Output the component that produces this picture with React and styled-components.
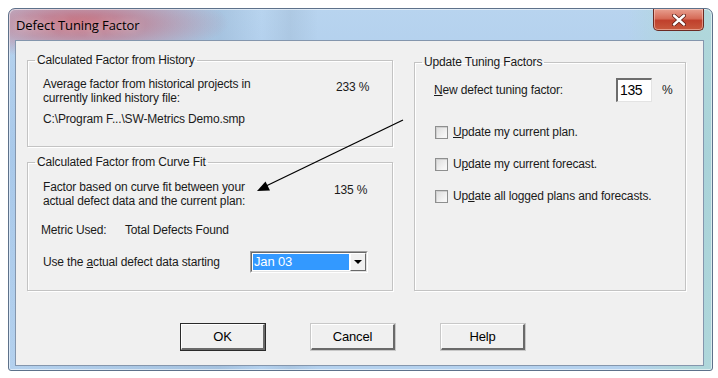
import React from 'react'
import styled, { createGlobalStyle } from 'styled-components'

const GlobalStyle = createGlobalStyle`
	body {
		margin: 0;
		background: #ffffff;
	}
`

const Page = styled.div`
	position: relative;
	width: 718px;
	height: 378px;
	padding: 8px 0 0 8px;
	box-sizing: border-box;
	font-family: "Liberation Sans", Arial, sans-serif;
	font-size: 12px;
	letter-spacing: -0.15px;
	color: #1a1a1a;
`

const Window = styled.div`
	width: 705px;
	height: 363px;
	box-sizing: border-box;
	border: 1px solid #5d718a;
	border-radius: 7px 7px 3px 3px;
	padding: 0 8px 4px 6px;
	display: flex;
	flex-direction: column;
	background:
		radial-gradient(ellipse 150px 36px at 70px 14px, rgba(200, 92, 106, 0.9), rgba(200, 92, 106, 0) 100%),
		linear-gradient(90deg, rgba(255,255,255,0) 0%, rgba(120,150,180,0.25) 30%, rgba(255,255,255,0) 36%, rgba(150,175,200,0.3) 40%, rgba(255,255,255,0) 44%, rgba(255,255,255,0) 88%, rgba(170,220,200,0.5) 96%),
		linear-gradient(180deg, #b8d4ef 0%, #a9c9ea 40%, #b4d1ee 100%);
	box-shadow: inset 0 0 0 1px rgba(255, 255, 255, 0.55);
`

const TitleBar = styled.div`
	height: 31px;
	display: flex;
	justify-content: space-between;
	flex-shrink: 0;
`

const Title = styled.span`
	align-self: center;
	margin-left: 1px;
	font-family: "Open Sans", "Liberation Sans", sans-serif;
	font-size: 13px;
	letter-spacing: -0.1px;
	color: #000;
	text-shadow: 0 0 8px rgba(255, 255, 255, 0.9);
`

const CloseButton = styled.div`
	width: 51px;
	height: 22px;
	box-sizing: border-box;
	border: 1px solid #6b2a22;
	border-top: none;
	border-radius: 0 0 5px 5px;
	background: linear-gradient(180deg, #e8a090 0%, #d66c58 45%, #c0402c 55%, #c85a3e 100%);
	box-shadow: inset 0 0 0 1px rgba(255, 220, 210, 0.5);
	display: flex;
	align-items: center;
	justify-content: center;
`

const Client = styled.div`
	flex: 1;
	border: 1px solid #8496ad;
	background: #f0f0f0;
	padding: 12px 16px 0 11px;
	display: flex;
	flex-direction: column;
`

const Columns = styled.div`
	display: grid;
	grid-template-columns: 366px 272px;
	column-gap: 21px;
`

const Stack = styled.div`
	display: flex;
	flex-direction: column;
	gap: 8px;
`

const Group = styled.fieldset`
	margin: 0;
	min-width: 0;
	padding: 0;
	border: 1px solid #c3c3c3;
	box-shadow: inset 1px 1px 0 #ffffff, 1px 1px 0 #ffffff;
	margin-top: ${p => p.$top || 0}px;
`

const Legend = styled.legend`
	margin-left: 7px;
	padding: 0 2px;
	line-height: 14px;
`

const GroupBody = styled.div`
	padding: ${p => p.$pad};
`

const InfoRow = styled.div`
	display: grid;
	grid-template-columns: ${p => p.$col}px auto;
	line-height: 14px;
`

const Value = styled.span`
	margin-top: 3px;
`

const Line = styled.div`
	line-height: 14px;
	margin-top: ${p => p.$top || 0}px;
	margin-left: ${p => p.$left || 0}px;
	display: flex;
	align-items: center;
`

const Label = styled.span`
	width: ${p => p.$w}px;
	flex-shrink: 0;
`

const Combo = styled.div`
	width: 118px;
	height: 22px;
	box-sizing: border-box;
	border-top: 1px solid #a0a0a0;
	border-left: 1px solid #a0a0a0;
	border-right: 1px solid #ffffff;
	border-bottom: 1px solid #ffffff;
	display: flex;
`

const ComboInner = styled.div`
	flex: 1;
	display: flex;
	border-top: 1px solid #696969;
	border-left: 1px solid #696969;
	border-right: 1px solid #e3e3e3;
	border-bottom: 1px solid #e3e3e3;
	background: #ffffff;
	padding: 1px;
`

const Selected = styled.span`
	flex: 1;
	background: #3399ff;
	color: #ffffff;
	padding-left: 1px;
	font-size: 13px;
	line-height: 16px;
`

const ComboButton = styled.div`
	width: 16px;
	margin: -1px -1px -1px 1px;
	box-sizing: border-box;
	background: #f0f0f0;
	border-top: 1px solid #ffffff;
	border-left: 1px solid #ffffff;
	border-right: 1px solid #696969;
	border-bottom: 1px solid #696969;
	display: flex;
	align-items: center;
	justify-content: center;
`

const Arrow = styled.span`
	width: 0;
	height: 0;
	border-left: 4px solid transparent;
	border-right: 4px solid transparent;
	border-top: 4px solid #000;
`

const FactorRow = styled.div`
	display: flex;
	align-items: center;
	height: 24px;
`

const NumberBox = styled.div`
	width: 36px;
	height: 24px;
	box-sizing: border-box;
	margin-left: ${p => p.$left}px;
	margin-right: 10px;
	background: #ffffff;
	border-top: 2px solid #6d6d6d;
	border-left: 2px solid #6d6d6d;
	border-right: 1px solid #e3e3e3;
	border-bottom: 1px solid #e3e3e3;
	padding-left: 2px;
	font-size: 14px;
	letter-spacing: -0.4px;
	line-height: 20px;
	color: #000;
`

const CheckRow = styled.label`
	display: flex;
	align-items: center;
	gap: 5px;
	margin-top: ${p => p.$top}px;
	margin-left: 1px;
	line-height: 14px;
`

const Box = styled.span`
	width: 13px;
	height: 13px;
	box-sizing: border-box;
	border: 1px solid #8e8f8f;
	background: linear-gradient(135deg, #dcdcdc 0%, #f6f6f6 80%);
	box-shadow: inset 1px 1px 0 #cfcfcf;
`

const ButtonRow = styled.div`
	display: flex;
	gap: 46px;
	padding-left: 154px;
	margin-top: 33px;
`

const Button = styled.div`
	width: 84px;
	height: 26px;
	box-sizing: border-box;
	background: #f0f0f0;
	border-top: 1px solid #ffffff;
	border-left: 1px solid #ffffff;
	border-right: 2px solid #6a6a6a;
	border-bottom: 2px solid #6a6a6a;
	outline: ${p => (p.$default ? '1px solid #2a2a2a' : '1px solid #c8c8c8')};
	display: flex;
	align-items: center;
	justify-content: center;
	font-size: 13px;
	color: #000;
`

const Overlay = styled.svg`
	position: absolute;
	left: 0;
	top: 0;
	pointer-events: none;
`

function App() {
	return (
		<Page>
			<GlobalStyle />
			<Window>
				<TitleBar>
					<Title>Defect Tuning Factor</Title>
					<CloseButton>
						<svg width="14" height="12" viewBox="0 0 14 12">
							<path d="M2 1.5 L12 10.5 M12 1.5 L2 10.5" stroke="#5a1a12" strokeWidth="4" strokeLinecap="round" />
							<path d="M2 1.5 L12 10.5 M12 1.5 L2 10.5" stroke="#ffffff" strokeWidth="2.4" strokeLinecap="round" />
						</svg>
					</CloseButton>
				</TitleBar>
				<Client>
					<Columns>
						<Stack>
							<Group>
								<Legend>Calculated Factor from History</Legend>
								<GroupBody $pad="10px 0 20px 15px">
									<InfoRow $col={293}>
										<span>Average factor from historical projects in<br />currently linked history file:</span>
										<Value>233 %</Value>
									</InfoRow>
									<Line $top={7}>C:\Program F...\SW-Metrics Demo.smp</Line>
								</GroupBody>
							</Group>
							<Group>
								<Legend>Calculated Factor from Curve Fit</Legend>
								<GroupBody $pad="11px 0 17px 15px">
									<InfoRow $col={291}>
										<span>Factor based on curve fit between your<br />actual defect data and the current plan:</span>
										<Value>135 %</Value>
									</InfoRow>
									<Line $top={15} $left={-2}>
										<Label $w={84}>Metric Used:</Label>
										<span>Total Defects Found</span>
									</Line>
									<Line $top={14}>
										<Label $w={207}>Use the <u>a</u>ctual defect data starting</Label>
										<Combo>
											<ComboInner>
												<Selected>Jan 03</Selected>
												<ComboButton><Arrow /></ComboButton>
											</ComboInner>
										</Combo>
									</Line>
								</GroupBody>
							</Group>
						</Stack>
						<Group $top={2}>
							<Legend>Update Tuning Factors</Legend>
							<GroupBody $pad="9px 0 0 19px">
								<FactorRow>
									<span><u>N</u>ew defect tuning factor:</span>
									<NumberBox $left={53}>135</NumberBox>
									<span>%</span>
								</FactorRow>
								<CheckRow $top={23}>
									<Box />
									<span><u>U</u>pdate my current plan.</span>
								</CheckRow>
								<CheckRow $top={18}>
									<Box />
									<span>U<u>p</u>date my current forecast.</span>
								</CheckRow>
								<CheckRow $top={18}>
									<Box />
									<span>Up<u>d</u>ate all logged plans and forecasts.</span>
								</CheckRow>
							</GroupBody>
						</Group>
					</Columns>
					<ButtonRow>
						<Button $default>OK</Button>
						<Button>Cancel</Button>
						<Button>Help</Button>
					</ButtonRow>
				</Client>
			</Window>
			<Overlay width="718" height="378" viewBox="0 0 718 378">
				<line x1="403" y1="120" x2="264" y2="187" stroke="#000" strokeWidth="1.3" />
				<polygon points="257,191 270,190.5 265.5,181.5" fill="#000" />
			</Overlay>
		</Page>
	)
}

export default App
